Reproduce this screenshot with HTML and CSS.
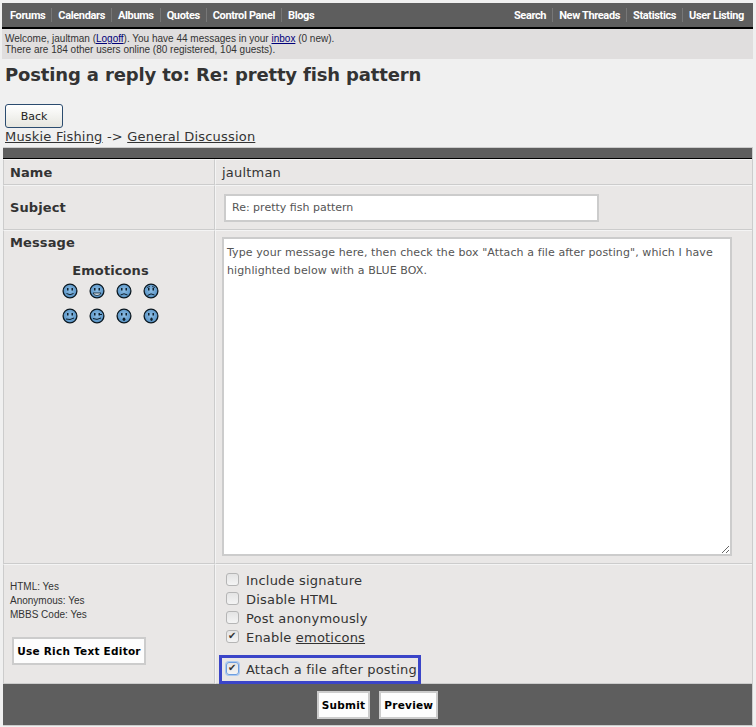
FILE: index.html
```html
<!DOCTYPE html>
<html lang="en">
<head>
    <meta charset="UTF-8">
    <title>Posting a reply to: Re: pretty fish pattern</title>
    <link rel="stylesheet" href="styles.css">
</head>
<body>
    <svg class="defs" width="0" height="0">
        <defs>
            <radialGradient id="faceFill" cx="50%" cy="45%" r="60%">
                <stop offset="0" stop-color="#8dbde4"/>
                <stop offset="1" stop-color="#4f8cc0"/>
            </radialGradient>
            <g id="face">
                <circle cx="8" cy="8" r="6.9" fill="url(#faceFill)" stroke="#0c1820" stroke-width="1.3"/>
                <rect x="5" y="5" width="1.5" height="2.5" fill="#10202c"/>
                <rect x="9.5" y="5" width="1.5" height="2.5" fill="#10202c"/>
            </g>
        </defs>
    </svg>
    <div class="container">
        <div class="topnav">
            <ul class="navlist">
                <li><a href="#">Forums</a></li>
                <li><a href="#">Calendars</a></li>
                <li><a href="#">Albums</a></li>
                <li><a href="#">Quotes</a></li>
                <li><a href="#">Control Panel</a></li>
                <li><a href="#">Blogs</a></li>
            </ul>
            <ul class="navlist">
                <li><a href="#">Search</a></li>
                <li><a href="#">New Threads</a></li>
                <li><a href="#">Statistics</a></li>
                <li><a href="#">User Listing</a></li>
            </ul>
        </div>
        <div class="welcome">
            Welcome, jaultman (<a href="#">Logoff</a>). You have 44 messages in your <a href="#">inbox</a> (0 new).<br>
            There are 184 other users online (80 registered, 104 guests).
        </div>
        <h1>Posting a reply to: Re: pretty fish pattern</h1>
        <button class="back" type="button">Back</button>
        <div class="crumbs"><a href="#">Muskie Fishing</a> -&gt; <a href="#">General Discussion</a></div>

        <form class="postform">
            <div class="formhead"></div>
            <table>
                <tr class="row-name">
                    <th>Name</th>
                    <td>jaultman</td>
                </tr>
                <tr class="row-subject">
                    <th>Subject</th>
                    <td><input class="subject" type="text" value="Re: pretty fish pattern"></td>
                </tr>
                <tr class="row-message">
                    <th>
                        Message
                        <div class="emoticons">
                            <div class="emo-title">Emoticons</div>
                            <div class="emo-grid">
                                <svg viewBox="0 0 16 16"><use href="#face"/><path d="M4.5 10.5q3.5 2.5 7 0" fill="none" stroke="#10202c"/></svg>
                                <svg viewBox="0 0 16 16"><use href="#face"/><path d="M4 10h8q-1 2.5-4 2.5T4 10z" fill="#dbe9f4" stroke="#10202c" stroke-width=".8"/></svg>
                                <svg viewBox="0 0 16 16"><use href="#face"/><path d="M4.5 12q3.5-2.5 7 0" fill="none" stroke="#10202c"/></svg>
                                <svg viewBox="0 0 16 16"><use href="#face"/><path d="M4.5 12.5q3.5-3 7-.5" fill="none" stroke="#10202c"/><path d="M4 4.5l3-1M12 4.5l-3-1" stroke="#10202c" stroke-width=".8"/></svg>
                                <svg viewBox="0 0 16 16"><use href="#face"/><path d="M4 11q4 1.5 8-1" fill="none" stroke="#10202c"/></svg>
                                <svg viewBox="0 0 16 16"><use href="#face"/><path d="M4 10.5q4 2 8-.5" fill="none" stroke="#10202c"/><path d="M11 6.5h2" stroke="#10202c"/></svg>
                                <svg viewBox="0 0 16 16"><use href="#face"/><ellipse cx="8" cy="11.3" rx="1.4" ry="1.8" fill="#10202c"/></svg>
                                <svg viewBox="0 0 16 16"><use href="#face"/><ellipse cx="8.5" cy="11.3" rx="1.2" ry="1.7" fill="#10202c"/></svg>
                            </div>
                        </div>
                    </th>
                    <td>
                        <textarea class="message">Type your message here, then check the box "Attach a file after posting", which I have highlighted below with a BLUE BOX.</textarea>
                    </td>
                </tr>
                <tr class="row-options">
                    <th class="perms">
                        <div class="permlist">
                            HTML: Yes<br>
                            Anonymous: Yes<br>
                            MBBS Code: Yes
                        </div>
                        <button class="plainbtn richtext" type="button">Use Rich Text Editor</button>
                    </th>
                    <td>
                        <label class="opt"><input type="checkbox"> Include signature</label>
                        <label class="opt"><input type="checkbox"> Disable HTML</label>
                        <label class="opt"><input type="checkbox"> Post anonymously</label>
                        <label class="opt"><input type="checkbox" checked> <span>Enable <a href="#">emoticons</a></span></label>
                        <label class="opt attach"><input class="focused" type="checkbox" checked> Attach a file after posting</label>
                    </td>
                </tr>
            </table>
            <div class="formfoot">
                <button class="plainbtn" type="button">Submit</button>
                <button class="plainbtn" type="button">Preview</button>
            </div>
        </form>
    </div>
</body>
</html>
```

FILE: styles.css
```css
body {
    margin: 0;
    background-color: #f0f0f0;
    color: #333;
    font-family: "DejaVu Sans", Verdana, sans-serif;
    font-size: 13px;
}
a {
    color: inherit;
}
.defs {
    position: absolute;
}
.container {
    padding: 3px 3px 0 2px;
}

/* top navigation */
.topnav {
    display: flex;
    justify-content: space-between;
    align-items: center;
    height: 24px;
    padding: 0 3px 0 2px;
    background-color: #5e5e5e;
    border-bottom: 2px solid #000;
}
.navlist {
    display: flex;
    margin: 0;
    padding: 0;
    list-style: none;
}
.navlist li {
    padding: 0 6px;
    border-left: 1px solid #777;
    line-height: 13px;
}
.navlist li:first-child {
    border-left: 0;
}
.navlist a {
    color: #fff;
    font-family: Roboto, sans-serif;
    font-size: 11px;
    font-weight: bold;
    letter-spacing: -0.36px;
    text-decoration: none;
}
.welcome {
    height: 26px;
    padding: 4px 0 0 3px;
    background-color: #e0dede;
    font-family: "Liberation Sans", Arial, sans-serif;
    font-size: 10px;
    line-height: 11px;
}
.welcome a {
    color: #00007a;
}
h1 {
    margin: 5px 0 0 3px;
    height: 40px;
    font-size: 18px;
    letter-spacing: -0.15px;
    line-height: 22px;
}
.back {
    display: block;
    width: 58px;
    height: 24px;
    margin-left: 3px;
    padding: 0;
    border: 1px solid #2b4c6f;
    border-radius: 3px;
    background: linear-gradient(#fff, #e6e6df);
    color: #222;
    font-family: inherit;
    font-size: 11px;
}
.crumbs {
    margin-left: 3px;
    height: 19px;
    line-height: 17px;
    letter-spacing: 0.2px;
}

/* form table */
.postform {
    margin-left: 1px;
    border-right: 1px solid #ccc;
}
.formhead {
    height: 10px;
    background-color: #5e5e5e;
    border-top: 1px solid #ccc;
    border-bottom: 1px solid #000;
}
table {
    width: 100%;
    border-collapse: separate;
    border-spacing: 0;
    table-layout: fixed;
}
th, td {
    padding: 0;
    background-color: #e9e7e6;
    border-top: 1px solid #f4f4f4;
    border-bottom: 1px solid #ccc;
    vertical-align: middle;
    text-align: left;
}
th {
    width: 204px;
    border-left: 1px solid #ccc;
    border-right: 1px solid #ccc;
    padding-left: 6px;
    font-weight: bold;
    letter-spacing: 0.1px;
}
td {
    border-left: 1px solid #f4f4f4;
    padding-left: 6px;
    letter-spacing: 0.2px;
}
.row-name th, .row-name td {
    height: 24px;
}
.row-subject th, .row-subject td {
    height: 43px;
}
.row-subject td {
    padding-left: 8px;
}
.subject {
    display: block;
    box-sizing: border-box;
    width: 375px;
    height: 28px;
    padding: 0 6px;
    border: 2px solid #ccc;
    background-color: #fff;
    color: #555;
    font-family: inherit;
    font-size: 11px;
}
.row-message th {
    vertical-align: top;
    padding-top: 4px;
}
.row-message td {
    height: 326px;
    vertical-align: top;
    padding-top: 6px;
    padding-left: 6px;
}
.message {
    display: block;
    box-sizing: border-box;
    width: 510px;
    height: 319px;
    padding: 5px 3px;
    border: 2px solid #ccc;
    background-color: #fff;
    color: #555;
    font-family: inherit;
    font-size: 11px;
    letter-spacing: 0.1px;
    line-height: 18px;
}
.emoticons {
    margin-top: 13px;
    padding-right: 3px;
    text-align: center;
}
.emo-title {
    line-height: 15px;
}
.emo-grid {
    display: grid;
    grid-template-columns: repeat(4, 16px);
    gap: 9px 11px;
    justify-content: center;
    margin-top: 5px;
}
.emo-grid svg {
    display: block;
    width: 16px;
    height: 16px;
}

/* options row */
.perms {
    vertical-align: top;
    font-weight: normal;
}
.permlist {
    margin-top: 15px;
    font-family: "Liberation Sans", Arial, sans-serif;
    font-size: 10px;
    letter-spacing: 0;
    line-height: 14px;
}
.plainbtn {
    height: 28px;
    padding: 0 3px;
    border: 2px solid #ccc;
    background-color: #fdfdfd;
    color: #000;
    font-family: inherit;
    font-size: 10.5px;
    font-weight: bold;
    letter-spacing: 0.25px;
    white-space: nowrap;
}
.richtext {
    display: block;
    width: 134px;
    margin: 15px 0 0 2px;
}
.row-options td {
    height: 112px;
    vertical-align: top;
    padding-left: 3px;
    padding-top: 6px;
}
.opt {
    display: flex;
    align-items: center;
    gap: 7px;
    height: 19px;
    padding-left: 7px;
}
.opt a {
    text-decoration: underline;
}
.opt input {
    appearance: none;
    position: relative;
    box-sizing: border-box;
    width: 13px;
    height: 13px;
    margin: -3px 0 0 0;
    border: 1px solid #b5b5b5;
    border-radius: 3px;
    background: linear-gradient(#e4e4e4, #f4f4f4);
}
.opt input:checked::after {
    content: "\2714";
    position: absolute;
    top: -2px;
    left: 1px;
    color: #333;
    font-size: 10px;
    line-height: 13px;
}
.opt input.focused {
    border-color: #6d9ee0;
    box-shadow: 0 0 0 1px #a9c8f0;
}
.attach {
    box-sizing: border-box;
    width: 202px;
    height: 29px;
    margin-top: 8px;
    margin-bottom: -1px;
    padding-left: 4px;
    border: 3px solid #3b45c8;
}
.formfoot {
    display: flex;
    justify-content: center;
    gap: 9px;
    height: 42px;
    padding-top: 7px;
    box-sizing: border-box;
    background-color: #5e5e5e;
    border-bottom: 1px solid #ccc;
}
```
